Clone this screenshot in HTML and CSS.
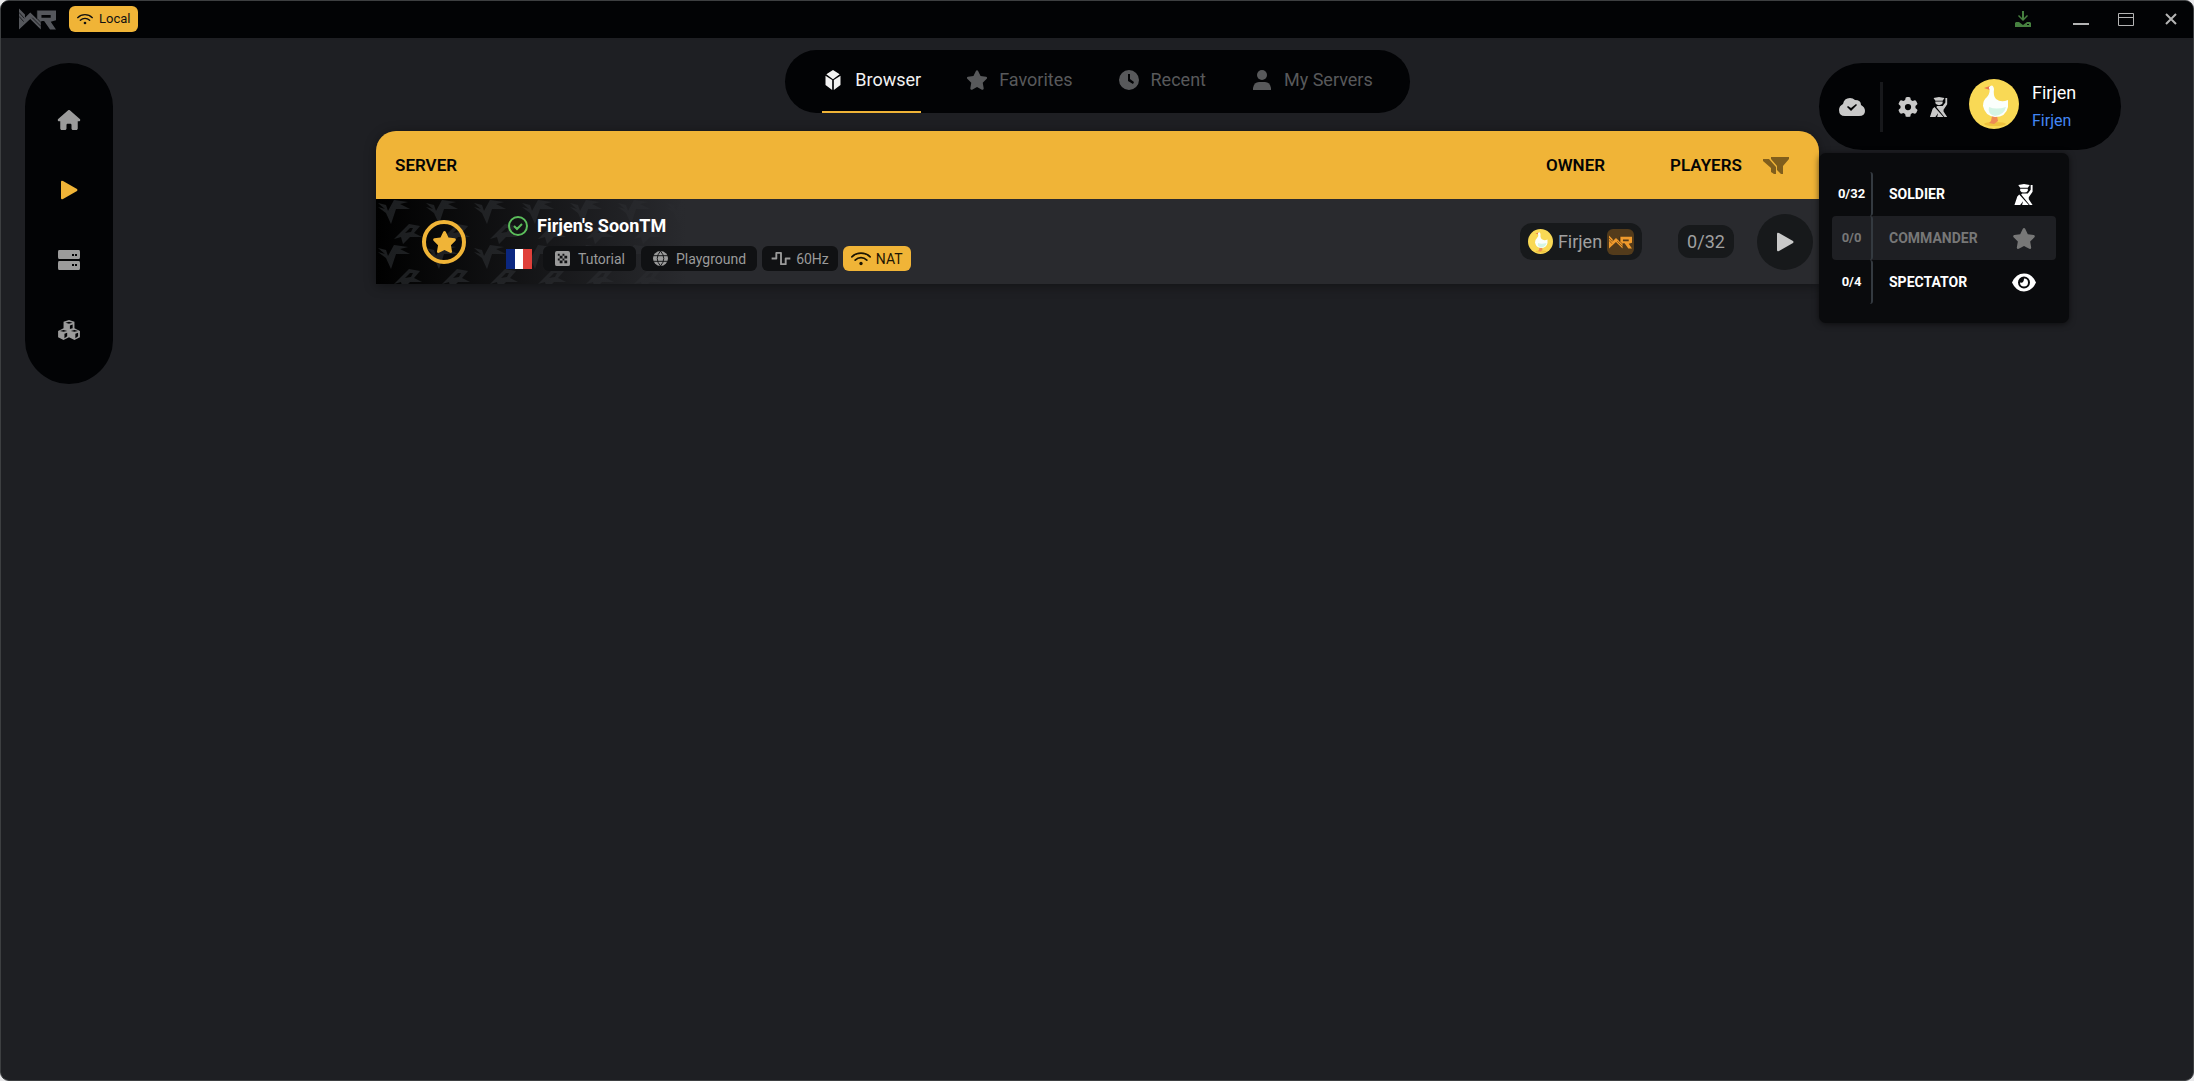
FILE: index.html
```html
<!DOCTYPE html>
<html lang="en">
<head>
    <meta charset="UTF-8">
    <meta name="viewport" content="width=device-width, initial-scale=1.0">
    <title>Server Browser</title>
    <link rel="stylesheet" href="styles.css">
</head>
<body>
    <!-- shared icons -->
    <svg class="sprite" aria-hidden="true">
        <symbol id="logo" viewBox="0 0 56 32">
            <path d="M0 0L9 9V14L17 6L24 13L27 16V3H56V18L48 20L56 32H47L38 19H34L33 22V32L17 16L0 32ZM34 10V14H48V10Z" fill-rule="evenodd"/>
            <path class="logo-cut" d="M0 6L8 15M0 12L7 20M20 14L33 27M27 15L34 22M27 3V15"/>
        </symbol>
        <symbol id="wifi" viewBox="0 0 24 18">
            <path d="M1 7C7 1 17 1 23 7M5 11C9 7 15 7 19 11" fill="none" stroke="currentColor" stroke-width="2" stroke-linecap="round"/>
            <circle cx="12" cy="15" r="2"/>
        </symbol>
        <symbol id="star" viewBox="0 0 576 512">
            <path d="M316.9 18C311.6 7 300.4 0 288.1 0s-23.4 7-28.8 18L195 150.3 51.4 171.5c-12 1.8-22 10.2-25.7 21.7s-.7 24.2 7.9 32.7L137.8 329 113.2 474.7c-2 12 3 24.2 12.9 31.3s23 8 33.8 2.3l128.3-68.5 128.3 68.5c10.8 5.7 23.9 4.9 33.8-2.3s14.9-19.3 12.9-31.3L438.5 329 542.7 225.9c8.6-8.5 11.7-21.2 7.9-32.7s-13.7-19.9-25.7-21.7L381.2 150.3 316.9 18z"/>
        </symbol>
        <symbol id="play" viewBox="0 0 18 20">
            <path d="M1 2Q1 0 3 1L17 9Q18 10 17 11L3 19Q1 20 1 18Z"/>
        </symbol>
        <symbol id="soldier" viewBox="0 0 20 22">
            <path d="M4 1L10 0L16 1L14 4H6ZM6 5H14V7Q13 9 10 9T6 7Z"/>
            <path d="M8 10H14L17 6V1H19V8L15 14V16L19 22H16L7 11ZM5 11L15 22H8L9 18L6 22H0L3 13Z"/>
        </symbol>
        <symbol id="goose" viewBox="0 0 50 50">
            <circle cx="25" cy="25" r="25" fill="#f9d955"/>
            <ellipse cx="26" cy="45" rx="11" ry="2" fill="#efc23d"/>
            <path d="M23 37L22 42L20 44L25 45L29 42L28 37Z" fill="#ee8b55"/>
            <path d="M15 9L21 7V11Z" fill="#e8784f"/>
            <path d="M20 8Q24 4 25 10Q24 17 27 20Q32 24 39 21V28Q37 38 26 38Q16 37 14 27Q14 21 18 18Q22 13 20 9Z" fill="#fbfffc"/>
            <path d="M20 28Q27 31 37 28Q35 36 26 37Q18 35 20 28Z" fill="#d4f5e5"/>
        </symbol>
    </svg>

    <header class="titlebar">
        <svg class="logo"><use href="#logo"/></svg>
        <span class="badge-local"><svg><use href="#wifi"/></svg>Local</span>
        <div class="window-buttons">
            <button type="button" class="download" aria-label="Downloads">
                <svg viewBox="0 0 16 16"><path d="M7 0H9V7L12 4L13 5L8 10L3 5L4 4L7 7ZM1 11H4L8 14L12 11H15L16 12V16H0V12ZM12 13V14H14V13Z" fill-rule="evenodd"/></svg>
            </button>
            <button type="button" aria-label="Minimize">
                <svg viewBox="0 0 16 16"><path d="M0 12H16V14H0Z"/></svg>
            </button>
            <button type="button" aria-label="Maximize">
                <svg viewBox="0 0 16 16"><path d="M.5 2.500H15.500V14.500H.5ZM.5 6.500H15.500" fill="none" stroke="currentColor"/></svg>
            </button>
            <button type="button" aria-label="Close">
                <svg viewBox="0 0 16 16"><path d="M3 3L13 13M13 3L3 13" fill="none" stroke="currentColor" stroke-width="2"/></svg>
            </button>
        </div>
    </header>

    <div class="layout">
        <aside>
            <nav class="sidebar" aria-label="Main">
                <a href="#" aria-label="Home">
                    <svg viewBox="0 0 576 512"><path d="M575.8 255.5c0 18-15 32.1-32 32.1h-32V472c0 22.1-17.9 40-40 40H392c-22.1 0-40-17.9-40-40V384c0-17.7-14.3-32-32-32H256c-17.7 0-32 14.3-32 32v88c0 22.1-17.9 40-40 40H104c-22.1 0-40-17.9-40-40V287.6H32c-18 0-32-14-32-32.1c0-9 3-17 10-24L266.4 8c7-7 15-8 22-8s15 2 21 7L564.8 231.5c8 7 12 15 11 24z"/></svg>
                </a>
                <a href="#" class="active" aria-label="Play"><svg><use href="#play"/></svg></a>
                <a href="#" aria-label="Servers">
                    <svg viewBox="0 0 24 20"><path d="M2 0H22Q23 0 23 2V7Q23 9 22 9H2Q1 9 1 7V2Q1 0 2 0ZM2 11H22Q23 11 23 13V18Q23 20 22 20H2Q1 20 1 18V13Q1 11 2 11ZM15 4V6H17V4ZM18 4V6H20V4ZM15 14V16H17V14ZM18 14V16H20V14Z" fill-rule="evenodd"/></svg>
                </a>
                <a href="#" aria-label="Mods">
                    <svg viewBox="0 0 24 22"><path d="M12 0L18 2V9L24 12V19L18 22L12 19L6 22L0 19V12L6 9V2ZM8 3L12 4L16 3L12 2ZM13 6V10L16 9V5ZM2 12L6 13L10 12L6 11ZM7 15V20L10 18V14ZM14 12L18 13L22 12L18 11ZM19 15V20L22 18V14Z" fill-rule="evenodd"/></svg>
                </a>
            </nav>
        </aside>

        <main>
            <nav class="tabs" aria-label="Server lists">
                <a href="#" class="active">
                    <svg viewBox="0 0 18 24"><path d="M9 0L17 5L9 11L1 5ZM0 7L8 12V24L0 18ZM18 7L10 12V24L18 18Z"/></svg>Browser
                </a>
                <a href="#"><svg><use href="#star"/></svg>Favorites</a>
                <a href="#">
                    <svg viewBox="0 0 20 20"><path d="M10 0A10 10 0 1 0 10 20A10 10 0 1 0 10 0ZM9 4H11V9L15 12L14 14L9 11Z" fill-rule="evenodd"/></svg>Recent
                </a>
                <a href="#">
                    <svg viewBox="0 0 20 20"><circle cx="10" cy="5" r="5"/><path d="M1 20V18Q2 12 7 12H13Q18 12 19 18V20Z"/></svg>My Servers
                </a>
            </nav>

            <table class="servers">
                <colgroup>
                    <col>
                    <col class="col-owner">
                    <col class="col-players">
                    <col class="col-join">
                </colgroup>
                <thead>
                    <tr>
                        <th class="th-server">SERVER</th>
                        <th class="th-owner">OWNER</th>
                        <th>PLAYERS</th>
                        <th class="th-filter">
                            <button type="button" class="filter" aria-label="Filter">
                                <svg viewBox="0 0 26 18"><path d="M8 0H26V2L20 9V17H18L14 13V9L8 2ZM0 2H6L13 10V17H11L8 15V11L0 4Z"/></svg>
                            </button>
                        </th>
                    </tr>
                </thead>
                <tbody>
                    <tr>
                        <td class="td-server">
                            <div class="server">
                                <button type="button" class="favorite" aria-label="Toggle favorite"><svg><use href="#star"/></svg></button>
                                <div class="info">
                                    <div class="name">
                                        <svg viewBox="0 0 20 20"><path d="M10 1A9 9 0 1 0 10 19A9 9 0 1 0 10 1ZM6 10L9 13L14 8" fill="none" stroke="currentColor" stroke-width="2"/></svg>
                                        Firjen's SoonTM
                                    </div>
                                    <div class="tags">
                                        <span class="flag" role="img" aria-label="France"></span>
                                        <span class="tag">
                                            <svg viewBox="0 0 16 16"><path d="M2 0H14Q16 0 16 2V14Q16 16 14 16H2Q0 16 0 14V2Q0 0 2 0ZM3 3V5H5V3ZM8 3V5H10V3ZM5 5V8H8V5ZM10 5V8H13V5ZM3 8V10H5V8ZM8 8V10H10V8ZM5 10V13H8V10ZM10 10V13H13V10Z" fill-rule="evenodd"/></svg>Tutorial
                                        </span>
                                        <span class="tag">
                                            <svg viewBox="0 0 16 16"><circle cx="8" cy="8" r="8"/><path d="M0 5H16M0 11H16M8 0Q1 8 8 16M8 0Q15 8 8 16" fill="none" stroke="#101113"/></svg>Playground
                                        </span>
                                        <span class="tag tag-rate">
                                            <svg viewBox="0 0 20 16"><path d="M0 8H5V2H10V14H15V8H20" fill="none" stroke="currentColor" stroke-width="2" stroke-linejoin="round"/></svg>60Hz
                                        </span>
                                        <span class="tag tag-nat"><svg><use href="#wifi"/></svg>NAT</span>
                                    </div>
                                </div>
                            </div>
                        </td>
                        <td>
                            <span class="owner">
                                <svg class="owner-avatar"><use href="#goose"/></svg>
                                Firjen
                                <span class="clan"><svg><use href="#logo"/></svg></span>
                            </span>
                        </td>
                        <td><span class="players">0/32</span></td>
                        <td><button type="button" class="join" aria-label="Join server"><svg><use href="#play"/></svg></button></td>
                    </tr>
                </tbody>
            </table>
        </main>

        <aside class="account">
            <div class="profile">
                <svg class="cloud" viewBox="0 0 26 18"><path d="M6 18Q0 18 0 12Q0 8 4 6Q5 0 11 0Q14 0 16 2Q22 2 22 7Q26 9 26 13Q26 18 20 18ZM8 9L12 13L18 7L17 6L12 10L9 8Z" fill-rule="evenodd"/></svg>
                <span class="divider"></span>
                <button type="button" aria-label="Settings">
                    <svg viewBox="0 0 512 512"><path d="M495.9 166.6c3.2 8.7 .5 18.4-6.4 24.6l-43.3 39.4c1.1 8.3 1.7 16.8 1.7 25.4s-.6 17.1-1.7 25.4l43.3 39.4c6.9 6.2 9.6 15.9 6.4 24.6c-4.4 11.9-9.7 23.3-15.8 34.3l-4.7 8.1c-6.6 11-14 21.4-22.1 31.2c-5.9 7.2-15.7 9.6-24.5 6.8l-55.7-17.7c-13.4 10.3-28.2 18.9-44 25.4l-12.5 57.1c-2 9.1-9 16.3-18.2 17.8c-13.8 2.3-28 3.5-42.5 3.5s-28.7-1.2-42.5-3.5c-9.2-1.5-16.2-8.7-18.2-17.8l-12.5-57.1c-15.8-6.5-30.6-15.1-44-25.4L83.1 425.9c-8.8 2.8-18.6 .3-24.5-6.8c-8.1-9.8-15.5-20.2-22.1-31.2l-4.7-8.1c-6.1-11-11.4-22.4-15.8-34.3c-3.2-8.7-.5-18.4 6.4-24.6l43.3-39.4C64.6 273.1 64 264.6 64 256s.6-17.1 1.7-25.4L22.4 191.2c-6.9-6.2-9.6-15.9-6.4-24.6c4.4-11.9 9.7-23.3 15.8-34.3l4.7-8.1c6.6-11 14-21.4 22.1-31.2c5.9-7.2 15.7-9.6 24.5-6.8l55.7 17.7c13.4-10.3 28.2-18.9 44-25.4l12.5-57.1c2-9.1 9-16.3 18.2-17.8C227.3 1.2 241.5 0 256 0s28.7 1.2 42.5 3.5c9.2 1.5 16.2 8.7 18.2 17.8l12.5 57.1c15.8 6.5 30.6 15.1 44 25.4l55.7-17.7c8.8-2.8 18.6-.3 24.5 6.8c8.1 9.8 15.5 20.2 22.1 31.2l4.7 8.1c6.1 11 11.4 22.4 15.8 34.3zM256 336a80 80 0 1 0 0-160 80 80 0 1 0 0 160z"/></svg>
                </button>
                <button type="button" aria-label="Role"><svg><use href="#soldier"/></svg></button>
                <svg class="avatar"><use href="#goose"/></svg>
                <div class="names">
                    <span>Firjen</span>
                    <a href="#">Firjen</a>
                </div>
            </div>

            <div class="roles">
                <button type="button"><span class="count">0/32</span><span class="role">SOLDIER</span><svg><use href="#soldier"/></svg></button>
                <button type="button" disabled><span class="count">0/0</span><span class="role">COMMANDER</span><svg><use href="#star"/></svg></button>
                <button type="button">
                    <span class="count">0/4</span><span class="role">SPECTATOR</span>
                    <svg viewBox="0 0 24 20"><path d="M12 1Q20 1 24 10Q20 19 12 19T0 10Q4 1 12 1ZM12 4A6 6 0 1 0 12 16A6 6 0 1 0 12 4ZM12 6A4 4 0 1 1 8 10Q12 11 12 6Z" fill-rule="evenodd"/></svg>
                </button>
            </div>
        </aside>
    </div>
</body>
</html>
```
FILE: styles.css
```css
* {
    box-sizing: border-box;
}

html {
    background: #e8e8ea;
}

body {
    font-family: Roboto, "Liberation Sans", sans-serif;
    margin: 0;
    min-height: 100vh;
    background-color: #1e1f23;
    border: 1px solid #3d3f41;
    border-radius: 9px;
    overflow: hidden;
    color: #fff;
}

svg {
    fill: currentColor;
    display: block;
    flex: none;
}

a {
    text-decoration: none;
    color: inherit;
}

button {
    font: inherit;
    color: inherit;
    background: none;
    border: none;
    padding: 0;
    cursor: pointer;
}

.sprite {
    position: absolute;
    width: 0;
    height: 0;
}

/* title bar */
.titlebar {
    display: flex;
    align-items: center;
    height: 37px;
    padding: 0 14px 2px 18px;
    background-color: #020305;
}

.logo {
    width: 37px;
    height: 22px;
    color: #55575c;
}

.logo-cut {
    fill: none;
    stroke: #020305;
    stroke-width: 1;
}

.badge-local {
    display: flex;
    align-items: center;
    gap: 6px;
    height: 26px;
    margin-left: 13px;
    padding: 0 8px;
    border-radius: 6px;
    background-color: #f0b437;
    color: #111;
    font-size: 13px;
}

.badge-local svg {
    width: 16px;
    height: 12px;
}

.window-buttons {
    display: flex;
    gap: 29px;
    margin-left: auto;
    color: #b4b4b4;
}

.window-buttons svg {
    width: 16px;
    height: 16px;
}

.window-buttons .download {
    margin-right: 13px;
    color: #46803f;
}

/* page columns */
.layout {
    display: grid;
    grid-template-columns: 375px 1fr 374px;
}

.sidebar {
    display: flex;
    flex-direction: column;
    align-items: center;
    gap: 46px;
    width: 88px;
    margin: 25px 0 0 24px;
    padding: 45px 0 42px;
    border-radius: 44px;
    background-color: #020305;
    color: #9b9b9b;
}

.sidebar a {
    display: flex;
    align-items: center;
    height: 24px;
}

.sidebar svg {
    width: 24px;
    height: 20px;
}

.sidebar .active {
    color: #f0b437;
}

/* tabs */
.tabs {
    display: flex;
    justify-content: center;
    gap: 45px;
    width: fit-content;
    height: 63px;
    margin: 12px auto 18px;
    padding: 0 37px;
    border-radius: 32px;
    background-color: #020305;
    color: #58595b;
    font-size: 18px;
}

.tabs a {
    display: flex;
    align-items: center;
    gap: 11px;
    padding-bottom: 2px;
    border-bottom: 2px solid transparent;
    white-space: nowrap;
}

.tabs svg {
    width: 22px;
    height: 20px;
}

.tabs .active {
    color: #f2f2f2;
    border-color: #f0b437;
}

/* server list */
.servers {
    width: 100%;
    table-layout: fixed;
    border-collapse: collapse;
    border-radius: 20px 20px 0 0;
    overflow: hidden;
    background-color: #292a2e;
    box-shadow: 0 2px 12px rgba(0, 0, 0, 0.4);
}

.col-owner {
    width: 160px;
}

.col-players {
    width: 90px;
}

.col-join {
    width: 68px;
}

.servers thead {
    background-color: #f0b437;
    color: #050505;
}

.servers th {
    height: 68px;
    padding: 0;
    font-size: 17px;
    font-weight: 600;
}

.servers td {
    height: 85px;
    padding: 0;
    text-align: center;
}

.servers .th-server {
    padding-left: 19px;
    text-align: left;
}

.servers .th-owner {
    padding-right: 11px;
}

.servers .th-filter {
    text-align: left;
}

.filter {
    margin-left: 12px;
    color: #805e1c;
    vertical-align: middle;
}

.filter svg {
    width: 26px;
    height: 18px;
}

.td-server {
    background:
        linear-gradient(90deg, transparent, #292a2e 310px),
        url("data:image/svg+xml,%3Csvg xmlns='http://www.w3.org/2000/svg' width='48' height='45'%3E%3Cg fill='%231c1e20'%3E%3Cpath d='M2 4L10 6L12 12L18 1L32 3L24 5L34 10H20L15 25L10 14L2 8L9 10Z'/%3E%3Cpath fill-rule='evenodd' d='M18 40L33 25L44 27L38 34L46 38L34 38L27 45L25 38ZM29 34L35 33L37 29L34 29Z'/%3E%3C/g%3E%3C/svg%3E"),
        #000;
}

.server {
    display: flex;
    align-items: center;
    text-align: left;
}

.favorite {
    display: flex;
    align-items: center;
    justify-content: center;
    width: 44px;
    height: 44px;
    margin: 0 40px 0 46px;
    border: 4px solid #f0b437;
    border-radius: 50%;
    color: #f0b437;
}

.favorite svg {
    width: 25px;
    height: 22px;
}

.info {
    padding-top: 2px;
}

.name {
    display: flex;
    align-items: center;
    gap: 9px;
    margin-bottom: 8px;
    padding-left: 2px;
    font-size: 18px;
    line-height: 24px;
    font-weight: 700;
}

.name svg {
    width: 20px;
    height: 20px;
    color: #5bbd5b;
}

.tags {
    display: flex;
    align-items: center;
    gap: 5px;
}

.flag {
    width: 26px;
    height: 20px;
    margin-right: 6px;
    background: linear-gradient(90deg, #0b2780 33%, #fff 33% 67%, #e0403a 67%);
}

.tag {
    display: flex;
    align-items: center;
    gap: 8px;
    height: 25px;
    padding: 0 11px 0 12px;
    border-radius: 6px;
    background-color: #101113;
    color: #9a9a9a;
    font-size: 14px;
}

.tag svg {
    width: 15px;
    height: 15px;
}

.tag-rate {
    gap: 5px;
    padding: 0 9px;
}

.tag-rate svg {
    width: 20px;
}

.tag-nat {
    gap: 5px;
    padding: 0 8px;
    background-color: #f0b437;
    color: #1c1503;
}

.tag-nat svg {
    width: 20px;
}

.owner {
    display: inline-flex;
    align-items: center;
    gap: 5px;
    height: 37px;
    padding: 0 8px;
    border-radius: 12px;
    background-color: #17191b;
    color: #a0a0a0;
    font-size: 18px;
    vertical-align: middle;
}

.owner-avatar {
    width: 25px;
    height: 25px;
}

.clan {
    padding: 6px 2px;
    border-radius: 6px;
    background-color: #533b1b;
    color: #f09a2c;
}

.clan svg {
    width: 23px;
    height: 14px;
}

.players {
    display: inline-block;
    padding: 0 9px;
    border-radius: 12px;
    background-color: #17191b;
    color: #a0a0a0;
    font-size: 18px;
    line-height: 33px;
}

.join {
    display: inline-flex;
    align-items: center;
    justify-content: center;
    width: 56px;
    height: 56px;
    border-radius: 50%;
    background-color: #17191b;
    color: #c9c9c9;
    vertical-align: middle;
}

.join svg {
    width: 18px;
    height: 20px;
}

/* account */
.account {
    position: relative;
}

.profile {
    display: flex;
    align-items: center;
    width: 302px;
    height: 87px;
    margin-top: 25px;
    padding-left: 20px;
    border-radius: 44px;
    background-color: #020305;
    color: #c9c9c9;
}

.cloud {
    width: 26px;
    height: 18px;
}

.divider {
    width: 3px;
    height: 50px;
    margin: 0 15px;
    background-color: #17181b;
}

.profile button {
    margin-right: 11px;
}

.profile button svg {
    width: 20px;
    height: 20px;
}

.avatar {
    width: 50px;
    height: 50px;
    margin: 0 13px 6px 9px;
}

.names {
    display: flex;
    flex-direction: column;
    gap: 4px;
    color: #fff;
    font-size: 18px;
    line-height: 24px;
}

.names a {
    color: #4287f5;
    font-size: 16px;
}

/* role menu, hangs under the profile */
.roles {
    position: absolute;
    top: 115px;
    left: 0;
    width: 250px;
    padding: 19px 13px;
    border-radius: 7px;
    background-color: #0a0b0d;
    box-shadow: 0 1px 6px rgba(0, 0, 0, 0.6);
    font-size: 14px;
    font-weight: 700;
}

.roles button {
    display: flex;
    align-items: center;
    width: 100%;
    height: 44px;
    padding-right: 20px;
    border-radius: 4px;
}

.roles button:disabled {
    background-color: #1e1f23;
    color: #777;
}

.count {
    width: 41px;
    border-right: 2px solid #343a40;
    border-radius: 3px;
    line-height: 44px;
    font-size: 13px;
}

.role {
    flex: 1;
    padding-left: 16px;
    text-align: left;
}

.roles svg {
    width: 24px;
    height: 21px;
}
```
